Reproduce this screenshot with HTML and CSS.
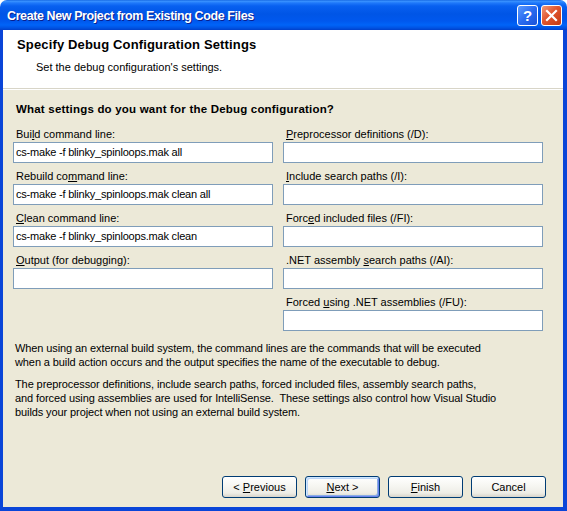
FILE: index.html
```html
<!DOCTYPE html>
<html>
<head>
<meta charset="utf-8">
<link rel="stylesheet" href="styles.css">
</head>
<body>
<div class="window">
  <div class="titlebar">
    <span class="title">Create New Project from Existing Code Files</span>
    <div class="tb-buttons">
      <span class="tb-btn help">?</span>
      <span class="tb-btn close"><svg width="13" height="13" viewBox="0 0 13 13"><path d="M2 2 L11 11 M11 2 L2 11" stroke="#fff" stroke-width="2.2" stroke-linecap="square" fill="none"/></svg></span>
    </div>
  </div>
  <div class="client">
    <div class="header">
      <div class="h-title">Specify Debug Configuration Settings</div>
      <div class="h-sub">Set the debug configuration's settings.</div>
    </div>
    <div class="body">
      <div class="question">What settings do you want for the Debug configuration?</div>
      <div class="grid">
        <div class="col">
          <div class="field"><div class="label">Bui<u>l</u>d command line:</div><div class="input">cs-make -f blinky_spinloops.mak all</div></div>
          <div class="field"><div class="label">Rebuild co<u>m</u>mand line:</div><div class="input">cs-make -f blinky_spinloops.mak clean all</div></div>
          <div class="field"><div class="label"><u>C</u>lean command line:</div><div class="input">cs-make -f blinky_spinloops.mak clean</div></div>
          <div class="field"><div class="label"><u>O</u>utput (for debugging):</div><div class="input"></div></div>
        </div>
        <div class="col">
          <div class="field"><div class="label"><u>P</u>reprocessor definitions (/D):</div><div class="input"></div></div>
          <div class="field"><div class="label"><u>I</u>nclude search paths (/I):</div><div class="input"></div></div>
          <div class="field"><div class="label">Forc<u>e</u>d included files (/FI):</div><div class="input"></div></div>
          <div class="field"><div class="label">.NET assembly <u>s</u>earch paths (/AI):</div><div class="input"></div></div>
          <div class="field"><div class="label">Forced <u>u</u>sing .NET assemblies (/FU):</div><div class="input"></div></div>
        </div>
      </div>
      <p class="p1">When using an external build system, the command lines are the commands that will be executed<br>when a build action occurs and the output specifies the name of the executable to debug.</p>
      <p class="p2">The preprocessor definitions, include search paths, forced included files, assembly search paths,<br>and forced using assemblies are used for IntelliSense.&nbsp; These settings also control how Visual Studio<br>builds your project when not using an external build system.</p>
      <div class="buttons">
        <span class="btn"><span>&lt; <u>P</u>revious</span></span>
        <span class="btn default"><span><u>N</u>ext &gt;</span></span>
        <span class="btn"><span><u>F</u>inish</span></span>
        <span class="btn"><span>Cancel</span></span>
      </div>
    </div>
  </div>
</div>
</body>
</html>
```
FILE: styles.css
```css
html, body {
  margin: 0;
  padding: 0;
  background: #ffffff;
}
body {
  width: 567px;
  height: 511px;
  overflow: hidden;
  font-family: "Liberation Sans", Arial, sans-serif;
  font-size: 11px;
  color: #000;
}
.window {
  width: 567px;
  height: 511px;
  display: flex;
  flex-direction: column;
}
.titlebar {
  height: 30px;
  flex: none;
  display: flex;
  align-items: center;
  justify-content: space-between;
  border-radius: 7px 7px 0 0;
  background: linear-gradient(to bottom, #0A5BDC 0px, #3D95FF 1px, #1F78FA 3px, #0860F0 6px, #0055E6 14px, #0058EE 21px, #0064F8 25px, #0052E2 28px, #003FCA 30px);
  padding: 0 5px 0 7px;
  box-sizing: border-box;
}
.title {
  color: #fff;
  font-weight: bold;
  font-size: 12.5px;
  letter-spacing: -0.4px;
  text-shadow: 1px 1px 0 #0A1E8C;
  padding-top: 1px;
}
.tb-buttons {
  display: flex;
  gap: 3px;
}
.tb-btn {
  width: 21px;
  height: 21px;
  box-sizing: border-box;
  border: 1px solid #fff;
  border-radius: 3px;
  display: flex;
  align-items: center;
  justify-content: center;
  color: #fff;
}
.help {
  background: linear-gradient(135deg, #5A9BFF 0%, #2A6BF0 50%, #1A52D8 100%);
  font-weight: bold;
  font-size: 15px;
  font-family: "Liberation Sans", Arial, sans-serif;
}
.close {
  background: linear-gradient(135deg, #F09A7A 0%, #E0552E 45%, #C53A12 100%);
}
.client {
  flex: 1;
  display: flex;
  flex-direction: column;
  border-style: solid;
  border-color: #0A45D8;
  border-width: 0 4px 4px 3px;
  box-sizing: border-box;
}
.header {
  height: 59px;
  flex: none;
  background: #fff;
  border-bottom: 1px solid #D8D5C8;
  padding: 8px 0 0 14px;
  box-sizing: border-box;
}
.h-title {
  font-weight: bold;
  font-size: 13px;
  letter-spacing: 0.15px;
  line-height: 14px;
}
.h-sub {
  line-height: 14px;
  margin: 8px 0 0 19px;
}
.body {
  flex: 1;
  background: #ECE9D8;
  border-top: 1px solid #fff;
  padding: 12px 17px 9px 10px;
  display: flex;
  flex-direction: column;
}
.question {
  font-weight: bold;
  font-size: 11.5px;
  letter-spacing: 0.2px;
  line-height: 14px;
  padding-left: 3px;
  margin-bottom: 11px;
}
.grid {
  display: grid;
  grid-template-columns: 260px 260px;
  column-gap: 10px;
  align-items: start;
}
.col {
  display: flex;
  flex-direction: column;
  gap: 6px;
}
.label {
  line-height: 15px;
  padding-left: 3px;
}
.input {
  height: 21px;
  box-sizing: border-box;
  border: 1px solid #7F9DB9;
  background: #fff;
  line-height: 19px;
  padding-left: 2px;
  letter-spacing: -0.2px;
  white-space: nowrap;
  overflow: hidden;
}
p {
  margin: 0;
  line-height: 14px;
  padding-left: 2px;
  letter-spacing: -0.1px;
}
.p1 { margin-top: 10px; }
.p2 { margin-top: 8px; }
.buttons {
  margin-top: auto;
  display: flex;
  justify-content: flex-end;
  gap: 8px;
}
.btn {
  width: 75px;
  height: 22px;
  box-sizing: border-box;
  border: 1px solid #003C74;
  border-radius: 3px;
  background: linear-gradient(to bottom, #FFFFFF 0%, #F7F7F3 40%, #EEEDE6 80%, #D8D4CA 100%);
  display: flex;
  align-items: center;
  justify-content: center;
}
.btn.default {
  box-shadow: inset 1px 1px 0 #CEE7FF, inset -1px -1px 0 #6982EE, inset 2px 2px 0 #BCD4F6, inset -2px -2px 0 #89ADE4;
}
u {
  text-decoration: underline;
  text-underline-offset: 1px;
}
```
